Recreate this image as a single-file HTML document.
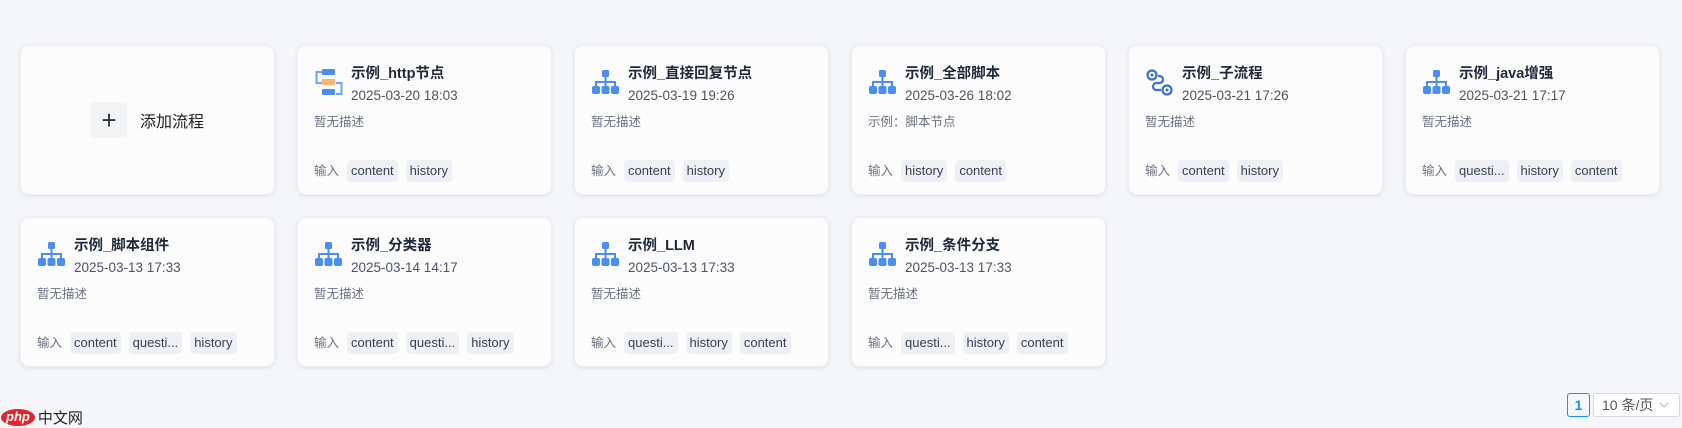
<!DOCTYPE html>
<html><head><meta charset="utf-8"><style>
*{margin:0;padding:0;box-sizing:border-box}
body{width:1682px;height:427px;background:#f5f6fa;font-family:"Liberation Sans","Noto Sans CJK SC",sans-serif;position:relative;overflow:hidden}
.card{position:absolute;width:255px;height:150px;background:#fcfcfd;border-radius:9px;box-shadow:0 1px 4px rgba(0,0,0,0.10);border:1px solid #eef0f3}
.ic{position:absolute;left:16px;top:22px;width:30px;height:30px}
.t{position:absolute;left:53px;top:16px;font-size:14.5px;font-weight:bold;color:#1f2937;white-space:nowrap}
.d{position:absolute;left:53px;top:42px;font-size:13.5px;color:#4b5563}
.s{position:absolute;left:16px;top:65px;font-size:12.5px;color:#6b7280}
.in{position:absolute;left:16px;top:114px;height:22px;font-size:12.5px;color:#6b7280;display:flex;align-items:center;gap:8px;line-height:22px}
.in>span:first-child{display:block;line-height:22px;height:22px}
.tag{background:#eef0f5;color:#374151;border-radius:4px;height:22px;line-height:22px;padding:0 4px;font-size:13px}
.add{display:flex;align-items:center;justify-content:center}
.plus{width:36px;height:36px;background:#f3f4f6;display:flex;align-items:center;justify-content:center;font-size:26px;color:#333;margin-right:13px;font-weight:300}
</style></head><body>
<svg width="0" height="0" style="position:absolute"><defs>
<g id="tree"><rect x="11" y="2" width="7" height="7" rx="1.5" fill="#4a8ef0"/><path d="M14.5 9v5M5 19v-5h19v5M14.5 14v5" stroke="#4a8ef0" stroke-width="2" fill="none"/><rect x="1" y="18" width="8" height="8" rx="2" fill="#4a8ef0"/><rect x="10.5" y="18" width="8" height="8" rx="2" fill="#4a8ef0"/><rect x="20" y="18" width="8" height="8" rx="2" fill="#4a8ef0"/></g>
</defs></svg>

<div class="card add" style="left:20px;top:45px"><div class="plus">+</div><span style="font-size:16px;color:#222">添加流程</span></div>

<div class="card" style="left:297px;top:45px">
<svg class="ic" style="left:17px" viewBox="0 0 30 30"><path d="M7 4H1.5v11H7M21 15h5.5v11H21" stroke="#6ea6f5" stroke-width="2" fill="none"/><rect x="7" y="1" width="13" height="6" rx="1" fill="#4a8ef0"/><rect x="7" y="11" width="13" height="6" rx="1" fill="#fbb46a"/><rect x="7" y="21" width="13" height="6" rx="1" fill="#4a8ef0"/></svg>
<div class="t">示例_http节点</div><div class="d">2025-03-20 18:03</div><div class="s">暂无描述</div>
<div class="in"><span>输入</span><span class="tag">content</span><span class="tag">history</span></div></div>

<div class="card" style="left:574px;top:45px">
<svg class="ic" viewBox="0 0 30 30"><use href="#tree"/></svg>
<div class="t">示例_直接回复节点</div><div class="d">2025-03-19 19:26</div><div class="s">暂无描述</div>
<div class="in"><span>输入</span><span class="tag">content</span><span class="tag">history</span></div></div>

<div class="card" style="left:851px;top:45px">
<svg class="ic" viewBox="0 0 30 30"><use href="#tree"/></svg>
<div class="t">示例_全部脚本</div><div class="d">2025-03-26 18:02</div><div class="s">示例：脚本节点</div>
<div class="in"><span>输入</span><span class="tag">history</span><span class="tag">content</span></div></div>

<div class="card" style="left:1128px;top:45px">
<svg class="ic" viewBox="0 0 30 30"><circle cx="7" cy="7" r="4.5" stroke="#3b6fe0" stroke-width="2.2" fill="none"/><circle cx="7" cy="7" r="1.5" fill="#3b6fe0"/><circle cx="22" cy="22" r="4.5" stroke="#3b6fe0" stroke-width="2.2" fill="none"/><circle cx="22" cy="22" r="1.5" fill="#3b6fe0"/><path d="M13 8h1.5a3.5 3.5 0 0 1 0 7h-3a3.5 3.5 0 0 0 0 7H16" stroke="#3b6fe0" stroke-width="2.2" fill="none"/></svg>
<div class="t">示例_子流程</div><div class="d">2025-03-21 17:26</div><div class="s">暂无描述</div>
<div class="in"><span>输入</span><span class="tag">content</span><span class="tag">history</span></div></div>

<div class="card" style="left:1405px;top:45px">
<svg class="ic" viewBox="0 0 30 30"><use href="#tree"/></svg>
<div class="t">示例_java增强</div><div class="d">2025-03-21 17:17</div><div class="s">暂无描述</div>
<div class="in"><span>输入</span><span class="tag">questi...</span><span class="tag">history</span><span class="tag">content</span></div></div>

<div class="card" style="left:20px;top:217px">
<svg class="ic" viewBox="0 0 30 30"><use href="#tree"/></svg>
<div class="t">示例_脚本组件</div><div class="d">2025-03-13 17:33</div><div class="s">暂无描述</div>
<div class="in"><span>输入</span><span class="tag">content</span><span class="tag">questi...</span><span class="tag">history</span></div></div>

<div class="card" style="left:297px;top:217px">
<svg class="ic" viewBox="0 0 30 30"><use href="#tree"/></svg>
<div class="t">示例_分类器</div><div class="d">2025-03-14 14:17</div><div class="s">暂无描述</div>
<div class="in"><span>输入</span><span class="tag">content</span><span class="tag">questi...</span><span class="tag">history</span></div></div>

<div class="card" style="left:574px;top:217px">
<svg class="ic" viewBox="0 0 30 30"><use href="#tree"/></svg>
<div class="t">示例_LLM</div><div class="d">2025-03-13 17:33</div><div class="s">暂无描述</div>
<div class="in"><span>输入</span><span class="tag">questi...</span><span class="tag">history</span><span class="tag">content</span></div></div>

<div class="card" style="left:851px;top:217px">
<svg class="ic" viewBox="0 0 30 30"><use href="#tree"/></svg>
<div class="t">示例_条件分支</div><div class="d">2025-03-13 17:33</div><div class="s">暂无描述</div>
<div class="in"><span>输入</span><span class="tag">questi...</span><span class="tag">history</span><span class="tag">content</span></div></div>

<div style="position:absolute;top:407px;left:1px;display:flex;align-items:center">
<span style="background:#e4262b;color:#fff;font-style:italic;font-size:13px;border-radius:50%;padding:0 5px;height:17px;line-height:16px;font-weight:bold">php</span>
<span style="font-size:15px;color:#222;margin-left:3px">中文网</span></div>

<div style="position:absolute;left:1567px;top:393px;width:23px;height:24px;border:1px solid #1890ff;border-radius:3px;color:#1890ff;font-weight:bold;font-size:14px;text-align:center;line-height:22px">1</div>
<div style="position:absolute;left:1593px;top:393px;width:87px;height:24px;border:1px solid #d9d9d9;border-radius:3px;color:#555;font-size:14px;line-height:22px;padding-left:8px;background:#fff">10 条/页<svg style="position:absolute;right:10px;top:8px" width="10" height="6" viewBox="0 0 10 6"><path d="M0.5 0.5L5 5 9.5 0.5" stroke="#bbb" fill="none"/></svg></div>
</body></html>
